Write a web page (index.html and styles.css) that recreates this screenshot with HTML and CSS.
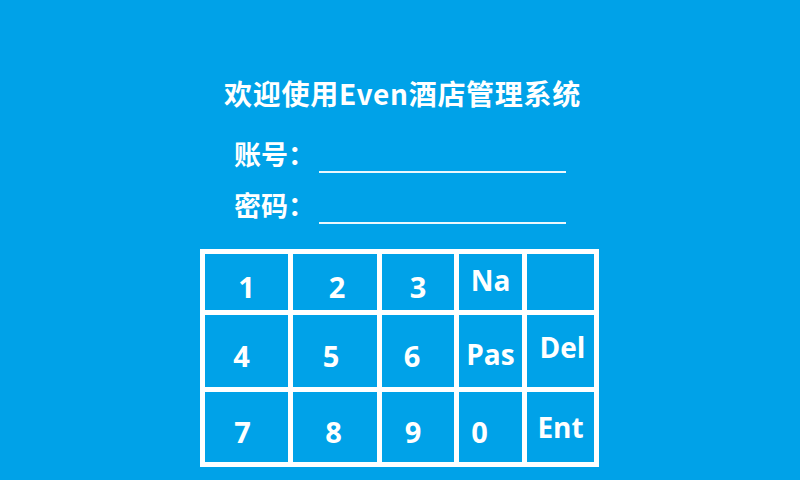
FILE: index.html
```html
<!DOCTYPE html>
<html lang="zh-CN">
<head>
<meta charset="utf-8">
<title>Even酒店管理系统</title>
<link rel="stylesheet" href="styles.css">
</head>
<body>
<div class="screen">
  <div class="panel">
    <h1 class="title">欢迎使用Even酒店管理系统</h1>
    <div class="form">
      <div class="field">
        <span class="label">账号：</span>
        <span class="line"></span>
      </div>
      <div class="field">
        <span class="label">密码：</span>
        <span class="line"></span>
      </div>
    </div>
    <div class="keypad">
      <div class="key">1</div>
      <div class="key k-r2">2</div>
      <div class="key">3</div>
      <div class="key k-word k-na">Na</div>
      <div class="key"></div>

      <div class="key k-l5">4</div>
      <div class="key k-l4">5</div>
      <div class="key k-l6">6</div>
      <div class="key k-word">Pas</div>
      <div class="key k-word k-del">Del</div>

      <div class="key k-l4">7</div>
      <div class="key k-l3">8</div>
      <div class="key k-l5">9</div>
      <div class="key k-l11">0</div>
      <div class="key k-word k-ent">Ent</div>
    </div>
  </div>
</div>
</body>
</html>
```

FILE: styles.css
```css
html, body {
  margin: 0;
  padding: 0;
}

body {
  width: 800px;
  height: 480px;
  background: #00a2e8;
  color: #ffffff;
  font-family: "Open Sans", "Noto Sans CJK SC", sans-serif;
  overflow: hidden;
}

.screen {
  display: flex;
  justify-content: center;
  width: 800px;
  height: 480px;
}

.panel {
  width: 400px;
  display: flex;
  flex-direction: column;
  padding-top: 76px;
}

.title {
  margin: 0;
  font-family: "Noto Sans CJK SC", sans-serif;
  font-size: 28px;
  font-weight: 700;
  line-height: 34px;
  letter-spacing: 0.7px;
  text-align: center;
  white-space: nowrap;
  padding-left: 5px;
}

.form {
  display: flex;
  flex-direction: column;
  gap: 15px;
  padding-left: 34px;
  margin-top: 27px;
}

.field {
  display: flex;
  align-items: flex-start;
}

.label {
  width: 85px;
  font-family: "Noto Sans CJK SC", sans-serif;
  font-size: 27px;
  font-weight: 700;
  line-height: 34px;
  white-space: nowrap;
}

.line {
  width: 247px;
  height: 2px;
  margin-top: 34px;
  background: #eaf7fd;
}

.keypad {
  margin-top: 25px;
  display: grid;
  grid-template-columns: 83px 84px 72px 63px 67px;
  grid-template-rows: 56px 72px 70px;
  gap: 5px;
  padding: 5px;
  background: #ffffff;
  width: 399px;
  box-sizing: border-box;
}

.key {
  background: #00a2e8;
  display: flex;
  align-items: center;
  justify-content: center;
  font-family: "Open Sans", sans-serif;
  font-weight: 700;
  font-size: 29px;
  line-height: 1;
  padding-top: 8px;
  box-sizing: border-box;
}

.k-word {
  font-size: 28px;
  padding-top: 6px;
}

.k-na {
  padding-top: 0;
  padding-bottom: 5px;
}

.k-del {
  padding-top: 0;
  padding-bottom: 8px;
  padding-left: 4px;
}

.k-ent {
  padding-top: 0;
}

.k-r2 { padding-left: 4px; }
.k-l3 { padding-right: 3px; }
.k-l4 { padding-right: 8px; }
.k-l5 { padding-right: 10px; }
.k-l6 { padding-right: 12px; }
.k-l11 { padding-right: 22px; }
```
